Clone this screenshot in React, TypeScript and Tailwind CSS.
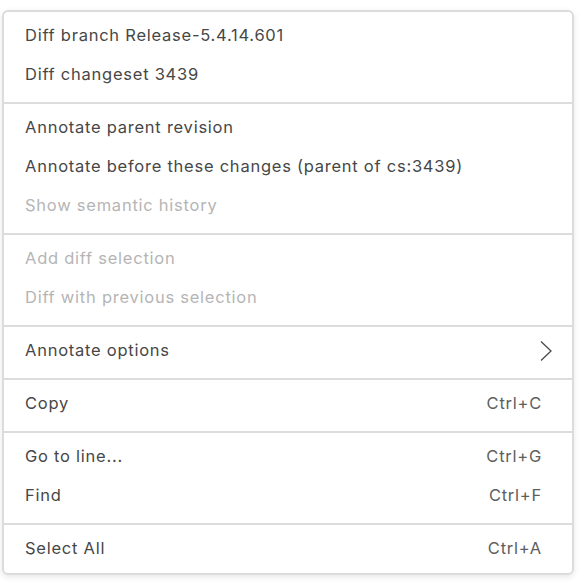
import React from "react";

type Item = { label: string; shortcut?: string; disabled?: boolean; submenu?: boolean };

const SECTIONS: Item[][] = [
  [{ label: "Diff branch Release-5.4.14.601" }, { label: "Diff changeset 3439" }],
  [
    { label: "Annotate parent revision" },
    { label: "Annotate before these changes (parent of cs:3439)" },
    { label: "Show semantic history", disabled: true },
  ],
  [
    { label: "Add diff selection", disabled: true },
    { label: "Diff with previous selection", disabled: true },
  ],
  [{ label: "Annotate options", submenu: true }],
  [{ label: "Copy", shortcut: "Ctrl+C" }],
  [
    { label: "Go to line...", shortcut: "Ctrl+G" },
    { label: "Find", shortcut: "Ctrl+F" },
  ],
  [{ label: "Select All", shortcut: "Ctrl+A" }],
];

function Chevron() {
  return (
    <svg width="14" height="22" viewBox="0 0 14 22" fill="none">
      <path d="M2 1.5 L12 11 L2 20.5" stroke="#4a4a4a" strokeWidth="1.3" />
    </svg>
  );
}

function MenuRow({ item }: { item: Item }) {
  return (
    <div
      className={
        "flex h-[39px] items-center justify-between pl-[21px] pr-5 " +
        (item.disabled ? "text-[#b5b5b5]" : "text-[#474747]")
      }
    >
      <span>{item.label}</span>
      {item.shortcut && <span className="mr-[10px] text-[#5e5e5e]">{item.shortcut}</span>}
      {item.submenu && (
        <span className="-mr-[1px]">
          <Chevron />
        </span>
      )}
    </div>
  );
}

export default function App() {
  return (
    <div className="min-h-[584px] w-[581px] bg-white pl-[2px] pt-[10px]" style={{ fontFamily: "Inter, 'Noto Sans', sans-serif" }}>
      <div className="w-[572px] rounded-[6px] border-2 border-[#dcdcdc] bg-white pb-[5px] pt-1 text-[16.5px] leading-[39px] tracking-[0.75px] shadow-[0_2px_6px_rgba(0,0,0,0.1)]">
        {SECTIONS.map((section, i) => (
          <div key={i}>
            {i > 0 && <div className="mb-1 mt-2 h-[2px] bg-[#dcdcdc]" />}
            {section.map((item) => (
              <MenuRow key={item.label} item={item} />
            ))}
          </div>
        ))}
      </div>
    </div>
  );
}
